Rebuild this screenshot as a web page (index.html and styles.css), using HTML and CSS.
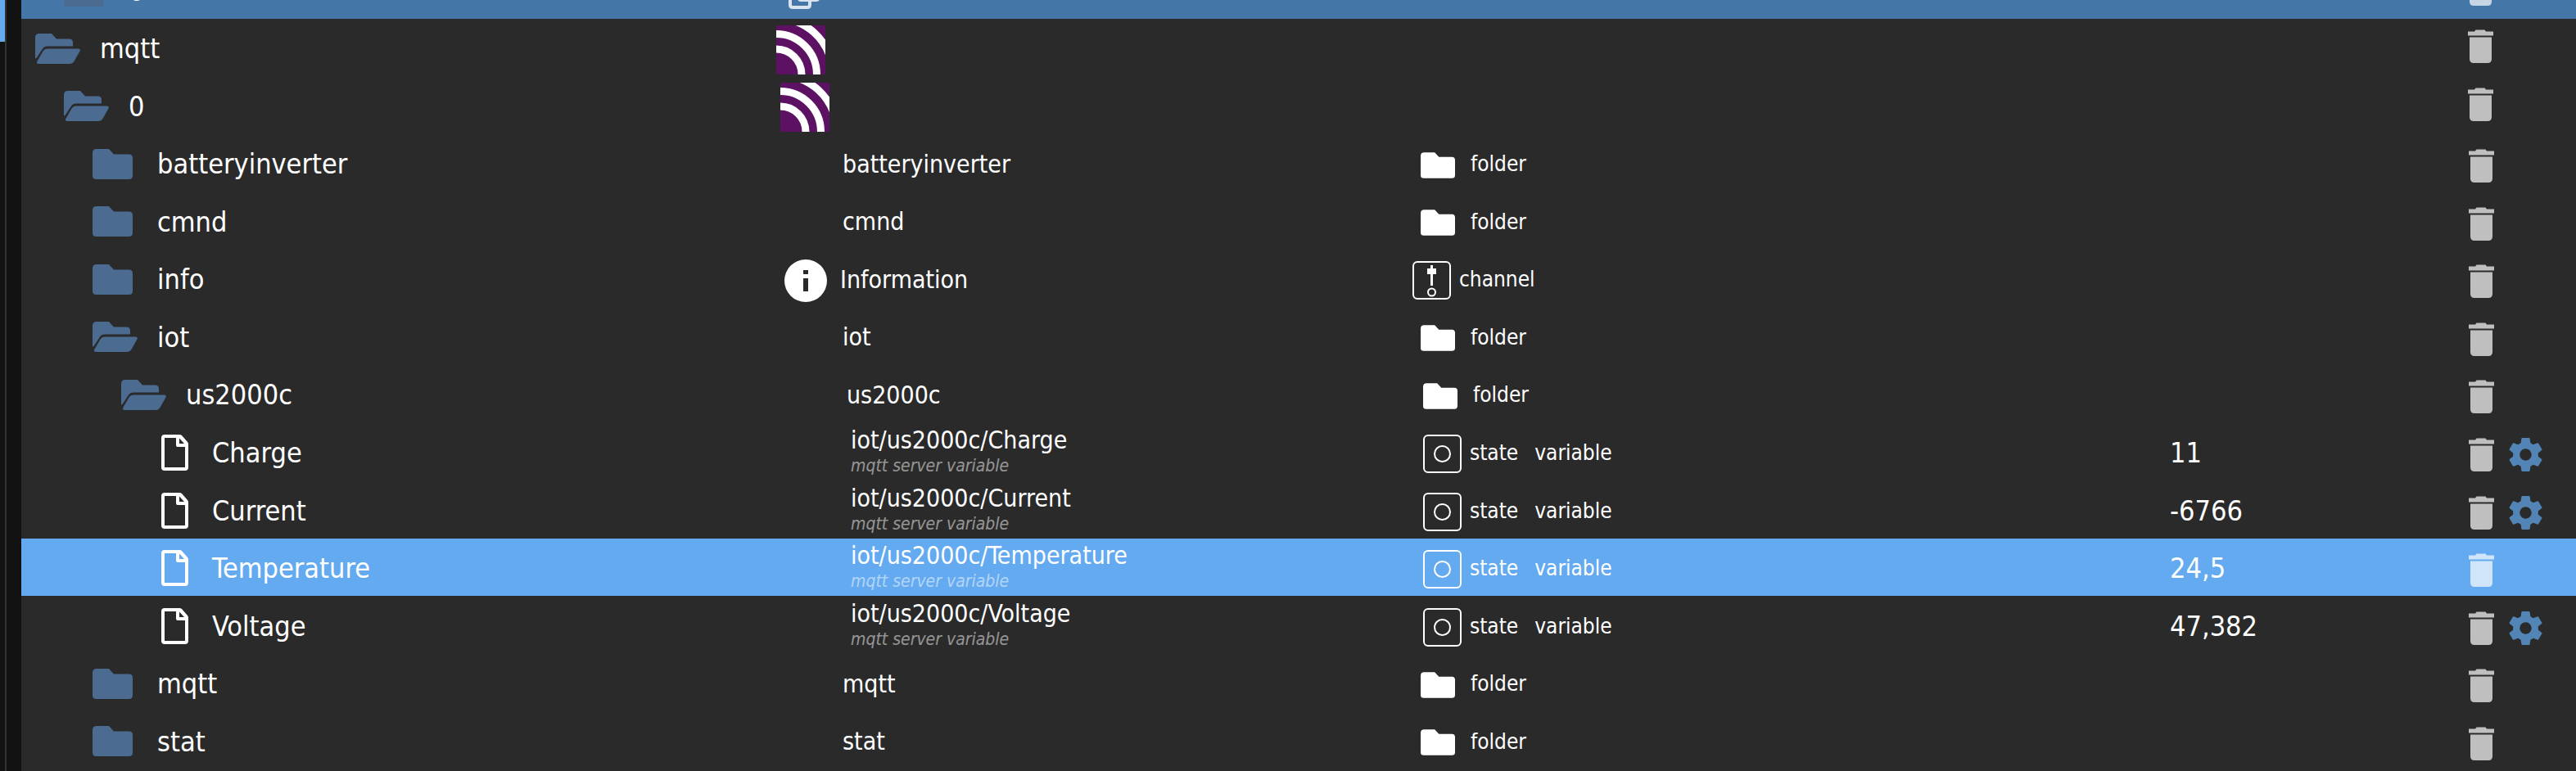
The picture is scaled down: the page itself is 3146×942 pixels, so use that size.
FILE: index.html
```
<!DOCTYPE html>
<html lang="en">
<head>
<meta charset="utf-8">
<title>Objects</title>
<link rel="stylesheet" href="styles.css">
<script src="tree.js" defer></script>
</head>
<body>
<svg class="sprite" aria-hidden="true">
  <symbol id="folder" viewBox="0 0 49 37"><path d="M5 0H20L26 6.5H44.5Q49 6.5 49 11V32.5Q49 37 44.5 37H4.500Q0 37 0 32.500V5Q0 0 5 0Z"/></symbol>
  <symbol id="folder-open" viewBox="0 0 55 37"><path d="M0 30.500V5Q0 0 5 0H20L26 6.500H41.500Q46 6.500 46 11V15.500H15Q11 15.500 9 18.500L1.500 30Z"/><path d="M14.500 18.500H53Q55.500 18.500 54.500 21.500L48 33Q46 37 42 37H4Q1 37 2.300 34L9.500 21.500Q11.500 18.500 14.500 18.500Z"/></symbol>
  <symbol id="file" viewBox="0 0 33 44"><path fill-rule="evenodd" d="M4 0H22Q24 0 25 1L32 9Q33 10 33 12V40Q33 44 29 44H4Q0 44 0 40V4Q0 0 4 0ZM4 4V40H29V15H20Q18 15 18 13V4ZM22 4.500V11H28Z"/></symbol>
  <symbol id="mqtt" viewBox="0 0 60 60"><rect width="60" height="60" rx="2" fill="#5c1163"/><g fill="none" stroke="#fff" stroke-width="9"><circle cx="0" cy="60" r="31"/><circle cx="0" cy="60" r="49.500"/><path d="M18.500 -6.500A69 69 0 0 1 64.500 35.500"/></g></symbol>
  <symbol id="info" viewBox="0 0 52 52"><path fill-rule="evenodd" d="M26 0A26 26 0 0 1 26 52A26 26 0 0 1 26 0ZM23 13V18H29V13ZM23 23V39H29V23Z"/></symbol>
  <symbol id="channel" viewBox="0 0 47 47"><g fill="none" stroke="currentColor" stroke-width="2"><rect x="1" y="1" width="45" height="45" rx="5"/><circle cx="23.500" cy="38" r="4.500"/></g><path d="M22 5H25V9H29V16H25V30H22V16H18V9H22Z"/></symbol>
  <symbol id="state" viewBox="0 0 47 47"><g fill="none" stroke="currentColor" stroke-width="2"><rect x="1" y="1" width="45" height="45" rx="5"/><circle cx="23.500" cy="23.500" r="9.500"/></g></symbol>
  <symbol id="trash" viewBox="0 0 31 41"><path d="M0 2.500H8L9.500 0.500H20.500L22 2.500H31V7.500H0ZM2 9.500H29V36Q29 41 24 41H7Q2 41 2 36Z"/></symbol>
  <symbol id="gear" viewBox="2 2 20 20"><path d="M19.430 12.980c.040-.320.070-.640.070-.980s-.030-.660-.070-.980l2.110-1.650c.190-.150.240-.420.120-.640l-2-3.460c-.120-.220-.390-.300-.610-.220l-2.490 1c-.520-.400-1.080-.730-1.690-.980l-.380-2.650C14.460 2.180 14.250 2 14 2h-4c-.250 0-.460.180-.490.420l-.380 2.650c-.610.250-1.170.590-1.690.980l-2.490-1c-.230-.090-.490 0-.610.220l-2 3.460c-.130.220-.070.490.120.640l2.110 1.650c-.040.320-.070.650-.070.980s.030.660.070.980l-2.110 1.650c-.190.150-.240.420-.120.640l2 3.460c.120.220.390.300.610.220l2.490-1c.520.400 1.080.730 1.690.980l.380 2.650c.030.240.240.420.490.420h4c.250 0 .460-.180.490-.420l.380-2.650c.610-.250 1.170-.590 1.690-.980l2.490 1c.230.090.490 0 .610-.220l2-3.460c.120-.220.070-.490-.120-.640l-2.110-1.650zM12 15.500c-1.930 0-3.500-1.570-3.500-3.500s1.570-3.500 3.500-3.500 3.500 1.570 3.500 3.500-1.570 3.500-3.500 3.500z"/></symbol>
  <symbol id="copy" viewBox="0 0 38 38"><g fill="none" stroke="currentColor" stroke-width="4"><path d="M8 10H5Q2 10 2 13V33Q2 36 5 36H23Q26 36 26 33V28"/><rect x="13" y="4" width="23" height="23" rx="2"/></g></symbol>
</svg>
<div class="app">
  <aside class="rail"><div class="rail-active"></div></aside>
  <main class="panel">
    <table class="tree"><tbody id="rows"></tbody></table>
  </main>
</div>
</body>
</html>
```
FILE: tree.js
```
const rows = [
  { level: 1, icon: "folder", name: "0", descIcon: "copy", cls: "partial" },
  { level: 0, icon: "folder-open", name: "mqtt", descIcon: "mqtt" },
  { level: 1, icon: "folder-open", name: "0", descIcon: "mqtt" },
  { level: 2, icon: "folder", name: "batteryinverter", desc: "batteryinverter", type: "folder" },
  { level: 2, icon: "folder", name: "cmnd", desc: "cmnd", type: "folder" },
  { level: 2, icon: "folder", name: "info", descIcon: "info", desc: "Information", type: "channel" },
  { level: 2, icon: "folder-open", name: "iot", desc: "iot", type: "folder" },
  { level: 3, icon: "folder-open", name: "us2000c", desc: "us2000c", type: "folder" },
  { level: 4, icon: "file", name: "Charge", type: "state", value: "11", gear: true },
  { level: 4, icon: "file", name: "Current", type: "state", value: "-6766", gear: true },
  { level: 4, icon: "file", name: "Temperature", type: "state", value: "24,5", cls: "selected" },
  { level: 4, icon: "file", name: "Voltage", type: "state", value: "47,382", gear: true },
  { level: 2, icon: "folder", name: "mqtt", desc: "mqtt", type: "folder" },
  { level: 2, icon: "folder", name: "stat", desc: "stat", type: "folder" }
];

const icon = (id, cls) => `<svg class="icon ${cls}" aria-hidden="true"><use href="#${id}"/></svg>`;
const button = (id, label) => `<button type="button" class="action" aria-label="${label}">${icon(id, id)}</button>`;

function rowHtml(r) {
  const leaf = r.icon === "file";
  const desc = leaf
    ? `<div class="lines"><span>iot/us2000c/${r.name}</span><em>mqtt server variable</em></div>`
    : r.desc ? `<span>${r.desc}</span>` : "";
  const type = r.type
    ? icon(r.type, "type-" + r.type) + `<span>${r.type}</span>` + (leaf ? `<span class="role">variable</span>` : "")
    : "";
  return `<tr class="row level-${r.level} ${r.cls || ""}">
    <td class="name"><span class="slot">${icon(r.icon, r.icon)}</span><span>${r.name}</span></td>
    <td class="desc"><span class="slot">${r.descIcon ? icon(r.descIcon, r.descIcon) : ""}</span>${desc}</td>
    <td class="type">${type}</td>
    <td class="value">${r.value || ""}</td>
    <td class="actions">${button("trash", "Delete " + r.name)}${r.gear ? button("gear", "Settings for " + r.name) : ""}</td>
  </tr>`;
}

document.getElementById("rows").innerHTML = rows.map(rowHtml).join("");
```
FILE: styles.css
```
* { box-sizing: border-box; }

body {
  margin: 0;
  background: #121212;
  color: #fff;
  font-family: "DejaVu Sans Condensed", "DejaVu Sans", Tahoma, sans-serif;
}

.sprite { position: absolute; width: 0; height: 0; }

.app { display: flex; min-height: 100vh; }

.rail {
  flex: none;
  width: 8px;
  margin-right: 18px;
  border-right: 2px solid #333;
}
.rail-active { height: 51px; background: #64aaf0; }

.panel { flex: 1; display: flex; background: #2a2a2a; }
.tree { flex: 1; display: flex; padding-bottom: 2px; }
.tree tbody { flex: 1; display: flex; flex-direction: column; }

.row {
  flex: 1 0 70px;
  display: grid;
  grid-template-columns: 922fr 777fr 923fr 360fr 138fr;
  --level: 0;
}
.level-1 { --level: 1; }
.level-2 { --level: 2; }
.level-3 { --level: 3; }
.level-4 { --level: 4; }

.selected { background: #64aaf0; }

/* Row scrolled almost out of view: only its lower edge shows */
.partial {
  flex: none;
  height: 23px;
  align-content: end;
  grid-template-rows: 70px;
  overflow: hidden;
  background: #4477a7;
}

td {
  display: flex;
  align-items: center;
  min-width: 0;
  padding: 2px 0 0;
  white-space: nowrap;
}

.icon { display: block; flex: none; fill: currentColor; }
.slot { flex: none; display: flex; }

.name { padding-left: calc(17px + 35px * var(--level)); font-size: 34px; }
.name .slot { width: 79px; }
.level-4 .name .slot { width: 76px; }
.folder { width: 49px; height: 37px; color: #4b6b91; }
.folder-open { width: 55px; height: 37px; color: #4b6b91; }
.file { width: 33px; height: 44px; margin-left: 14px; }

.desc { padding-left: calc(5px * var(--level)); font-size: 30px; }
.desc .slot { width: 71px; }
.desc .slot:has(.info) { width: 68px; }
.mqtt { width: 60px; height: 60px; margin-top: 3px; }
.info { width: 52px; height: 52px; margin-top: 3px; }
.copy { width: 38px; height: 38px; margin: 6px 0 0 10px; opacity: 0.8; }

.lines { display: flex; flex-direction: column; gap: 2px; line-height: 30px; }
.lines em { font-size: 21px; line-height: 28px; opacity: 0.5; }

.type { font-size: 26px; }
.type-folder { width: 42px; height: 32px; margin: 3px 19px 0 10px; }
.level-3 .type { padding-left: 3px; }
.type-channel { width: 47px; height: 47px; margin: 3px 10px 0 0; }
.type-state { width: 47px; height: 47px; margin: 3px 10px 0 13px; }
.role { margin-left: 20px; }

.value { padding-left: 2px; font-size: 34px; }

.actions { gap: 18px; padding: 7px 0 0 7px; }
.level-0 .actions, .level-1 .actions { padding: 0 0 3px 6px; }
.action { padding: 0; border: 0; background: none; color: #fff; cursor: pointer; }
.trash { width: 31px; height: 41px; opacity: 0.7; }
.gear { width: 41px; height: 43px; color: #5285b5; }
```
